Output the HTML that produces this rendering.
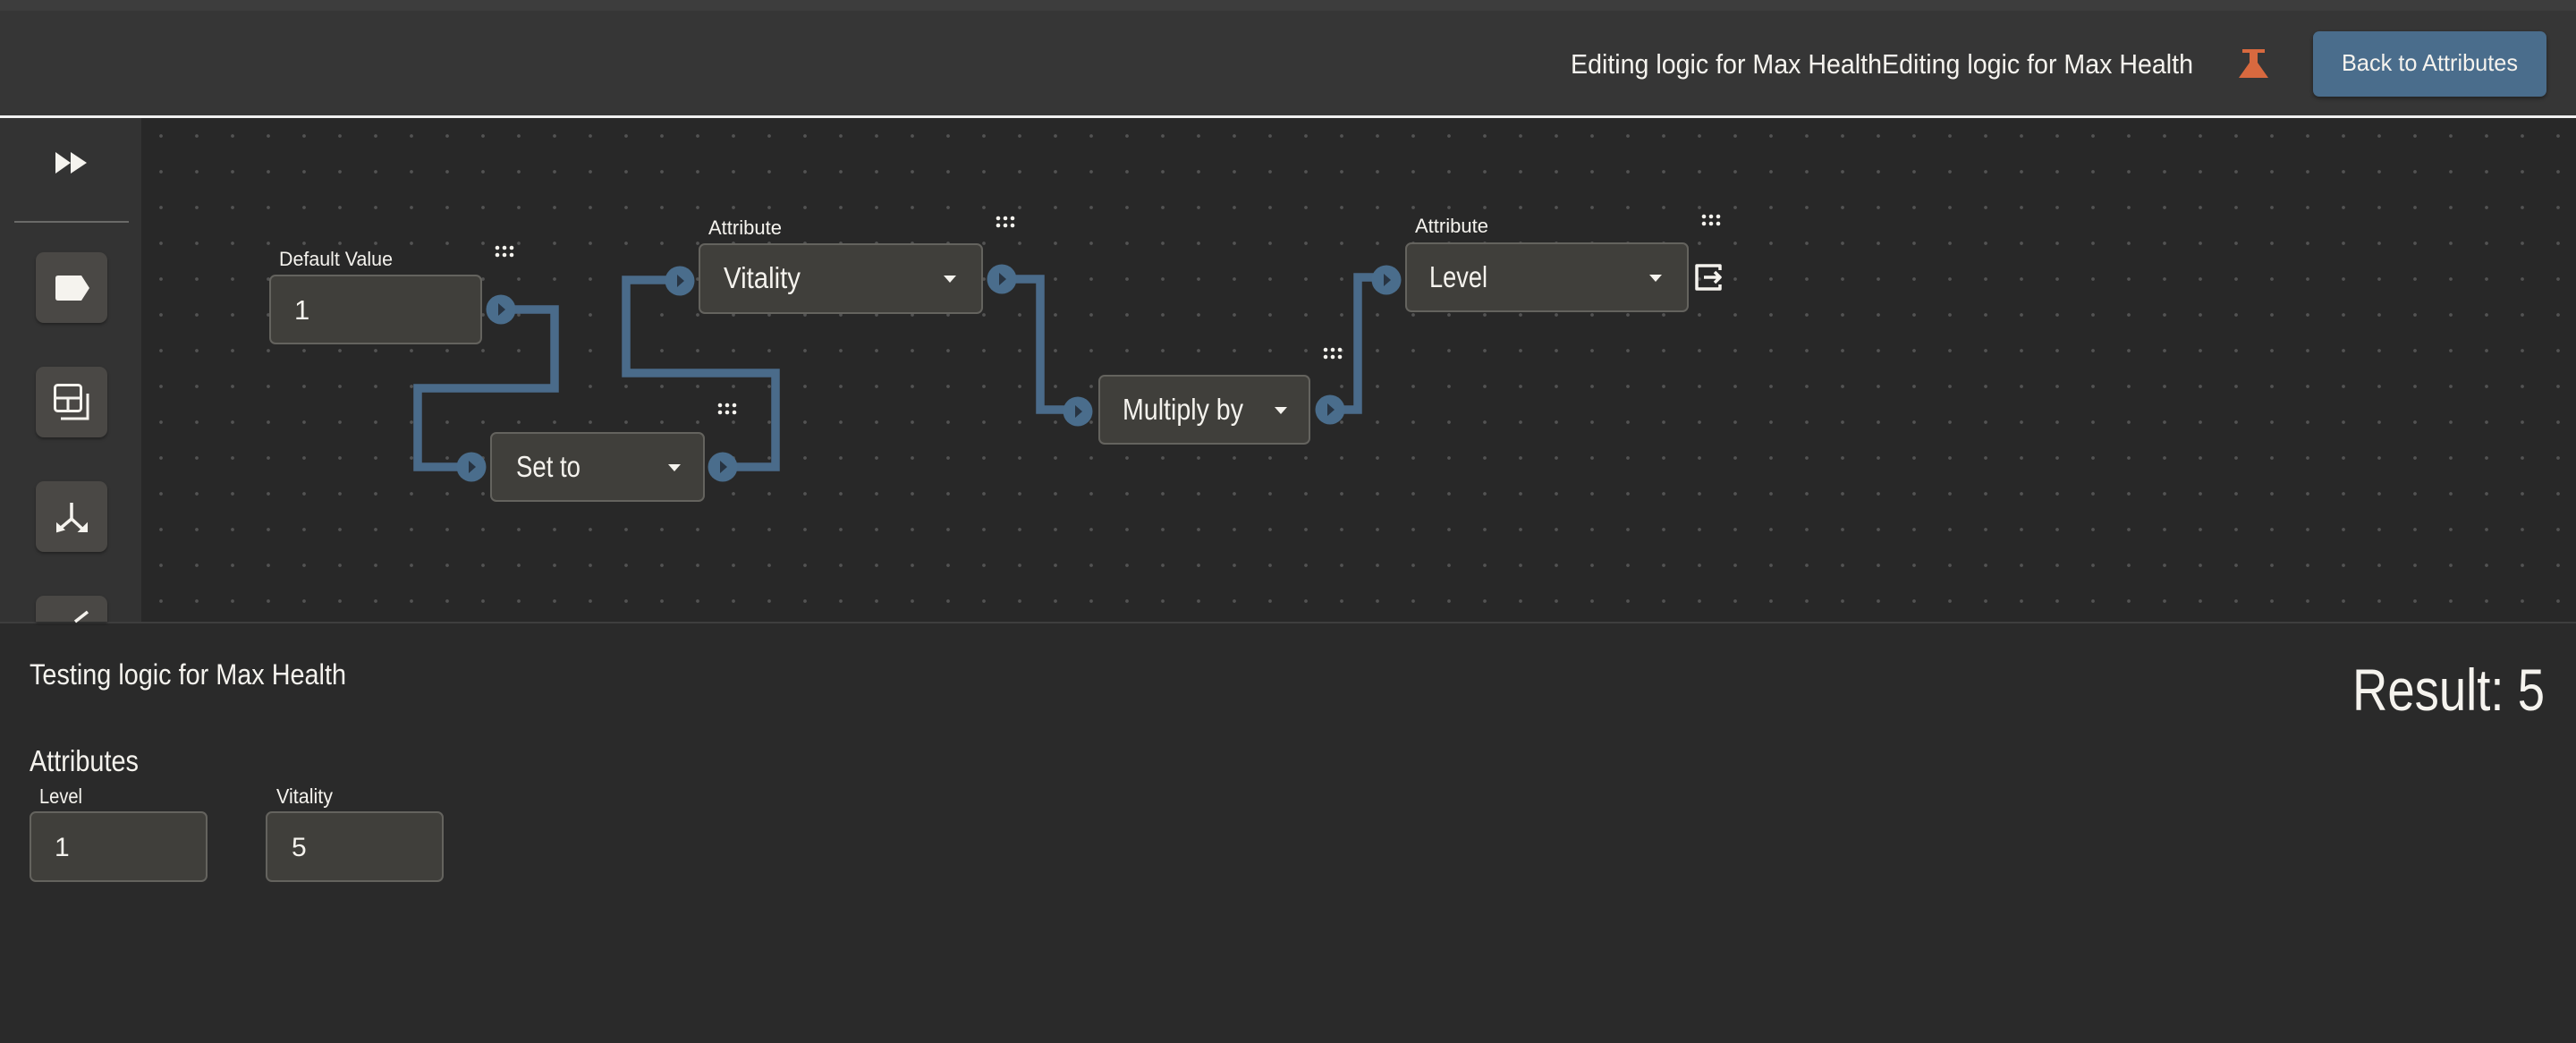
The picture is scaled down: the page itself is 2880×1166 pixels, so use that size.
<!DOCTYPE html>
<html><head><meta charset="utf-8">
<style>
*{margin:0;padding:0;box-sizing:border-box}
html,body{width:2880px;height:1166px;overflow:hidden;background:#2a2a2a;font-family:"Liberation Sans",sans-serif;color:#f5f3ee}
.abs{position:absolute}
.t{position:absolute;white-space:nowrap;transform-origin:0 0;line-height:1}
#topstrip{left:0;top:0;width:2880px;height:12px;background:#3d3d3d}
#header{left:0;top:12px;width:2880px;height:118px;background:#363636}
#hline{left:0;top:129px;width:2880px;height:3px;background:#f0f0f0}
#side{left:0;top:132px;width:158px;height:564px;background:#333333}
#canvas{left:158px;top:132px;width:2722px;height:564px;background-color:#282828;
 background-image:radial-gradient(circle at 20px 20px,#535353 0,#535353 1.6px,transparent 2.2px);
 background-size:40px 40px;background-position:2px 0}
#bline{left:0;top:695px;width:2880px;height:2px;background:#3e3e3e}
.sbtn{position:absolute;left:40px;width:80px;height:79px;background:#4a4845;border-radius:9px;box-shadow:0 2px 3px rgba(0,0,0,.35)}
.box{position:absolute;background:#403f3b;border:2px solid #64635e;border-radius:7px}
.btn{left:2586px;top:35px;width:261px;height:73px;background:#4a6d8c;border-radius:7px;box-shadow:0 2px 4px rgba(0,0,0,.4)}
</style></head><body>
<div id="topstrip" class="abs"></div>
<div id="header" class="abs"></div>
<div id="hline" class="abs"></div>
<div id="side" class="abs"></div>
<div id="canvas" class="abs"></div>
<div id="bline" class="abs"></div>

<div class="t" id="h1" style="left:1756px;top:56px;font-size:31px">Editing logic for Max HealthEditing logic for Max Health</div>
<div class="abs btn"></div>
<div class="t" id="h2" style="left:2618px;top:57px;font-size:26px">Back to Attributes</div>

<div class="abs" style="left:16px;top:247px;width:128px;height:2px;background:#6a6a68"></div>
<div class="sbtn" style="top:282px"></div>
<div class="sbtn" style="top:410px"></div>
<div class="sbtn" style="top:538px"></div>
<div class="sbtn" style="top:666px;height:29px;border-radius:9px 9px 0 0"></div>

<div class="box" style="left:301px;top:307px;width:238px;height:78px"></div>
<div class="box" style="left:548px;top:483px;width:240px;height:78px"></div>
<div class="box" style="left:781px;top:272px;width:318px;height:79px"></div>
<div class="box" style="left:1228px;top:419px;width:237px;height:78px"></div>
<div class="box" style="left:1571px;top:271px;width:317px;height:78px"></div>

<div class="t" id="l1" style="left:312px;top:279px;font-size:22px">Default Value</div>
<div class="t" id="l2" style="left:792px;top:244px;font-size:22px">Attribute</div>
<div class="t" id="l3" style="left:1582px;top:242px;font-size:22px">Attribute</div>
<div class="t" id="n1" style="left:329px;top:331px;font-size:31px">1</div>
<div class="t" id="n2" style="left:577px;top:505px;font-size:33px">Set to</div>
<div class="t" id="n3" style="left:809px;top:294px;font-size:33px">Vitality</div>
<div class="t" id="n4" style="left:1255px;top:441px;font-size:33px">Multiply by</div>
<div class="t" id="n5" style="left:1598px;top:293px;font-size:33px">Level</div>

<div class="t" id="b1" style="left:33px;top:738px;font-size:32px">Testing logic for Max Health</div>
<div class="t" id="b2" style="left:2630px;top:738px;font-size:66px">Result: 5</div>
<div class="t" id="b3" style="left:33px;top:834px;font-size:33px">Attributes</div>
<div class="t" id="b4" style="left:44px;top:879px;font-size:23px">Level</div>
<div class="t" id="b5" style="left:309px;top:879px;font-size:23px">Vitality</div>
<div class="box" style="left:33px;top:907px;width:199px;height:79px"></div>
<div class="box" style="left:297px;top:907px;width:199px;height:79px"></div>
<div class="t" id="b6" style="left:61px;top:933px;font-size:30px">1</div>
<div class="t" id="b7" style="left:326px;top:933px;font-size:30px">5</div>

<svg class="abs" style="left:0;top:0" width="2880" height="1166" viewBox="0 0 2880 1166">
 <path d="M2507 55 H2532 V59 H2524 V70 L2536 87 H2503 L2515 70 V59 H2507 Z" fill="#d8693f"/>
 <path d="M62 170 L79 182 L62 194 Z M79 170 L97 182 L79 194 Z" fill="#f5f3ee"/>
 <path d="M65 308 H91 L100 322 L91 336 H65 Q62 336 62 333 V311 Q62 308 65 308 Z" fill="#f5f3ee"/>
 <g fill="none" stroke="#f5f3ee" stroke-width="3">
  <rect x="61.5" y="430.5" width="29" height="29" rx="3"/>
  <path d="M61.5 445 H90.5 M76 445 V459.5"/>
  <path d="M68 468 H98 V440"/>
 </g>
 <g fill="none" stroke="#f5f3ee" stroke-width="3.5">
  <path d="M80 562 V580 L94 593"/>
  <path d="M80 580 L67 591"/>
 </g>
 <path d="M89 594 H97 V586 Z" fill="#f5f3ee" stroke="#f5f3ee" stroke-width="2"/>
 <path d="M64 594 V586 L71 592 Z" fill="#f5f3ee" stroke="#f5f3ee" stroke-width="2"/>
 <path d="M84 695 L98 684" stroke="#f5f3ee" stroke-width="3.5"/>

 <g fill="none" stroke="#4a6b8a" stroke-width="9.5" stroke-linejoin="miter">
  <path d="M560 346 H620 V434 H467 V522 H527"/>
  <path d="M808 522 H867 V417 H700 V313 H760"/>
  <path d="M1120 312 H1163 V458 H1205"/>
  <path d="M1487 458 H1518 V310 H1550"/>
 </g>
 <g fill="#4a6d8c">
  <circle cx="560" cy="346" r="16.5"/><circle cx="527" cy="522" r="16.5"/>
  <circle cx="808" cy="522" r="16.5"/><circle cx="760" cy="314" r="16.5"/>
  <circle cx="1120" cy="312" r="16.5"/><circle cx="1205" cy="460" r="16.5"/>
  <circle cx="1487" cy="458" r="16.5"/><circle cx="1550" cy="313" r="16.5"/>
 </g>
 <g fill="#283442">
  <path d="M557 339 L565 346 L557 353 Z"/><path d="M524 515 L532 522 L524 529 Z"/>
  <path d="M805 515 L813 522 L805 529 Z"/><path d="M757 307 L765 314 L757 321 Z"/>
  <path d="M1117 305 L1125 312 L1117 319 Z"/><path d="M1202 453 L1210 460 L1202 467 Z"/>
  <path d="M1484 451 L1492 458 L1484 465 Z"/><path d="M1547 306 L1555 313 L1547 320 Z"/>
 </g>
 <g fill="#f5f3ee">
  <path d="M747 519 H761 L754 527 Z"/><path d="M1055 308 H1069 L1062 316 Z"/>
  <path d="M1425 455 H1439 L1432 463 Z"/><path d="M1844 307 H1858 L1851 315 Z"/>
 </g>
 <g fill="#f5f3ee">
  <g transform="translate(556,277)"><circle cx="0" cy="0" r="2.3"/><circle cx="8" cy="0" r="2.3"/><circle cx="16" cy="0" r="2.3"/><circle cx="0" cy="8" r="2.3"/><circle cx="8" cy="8" r="2.3"/><circle cx="16" cy="8" r="2.3"/></g>
  <g transform="translate(805,453)"><circle cx="0" cy="0" r="2.3"/><circle cx="8" cy="0" r="2.3"/><circle cx="16" cy="0" r="2.3"/><circle cx="0" cy="8" r="2.3"/><circle cx="8" cy="8" r="2.3"/><circle cx="16" cy="8" r="2.3"/></g>
  <g transform="translate(1116,244)"><circle cx="0" cy="0" r="2.3"/><circle cx="8" cy="0" r="2.3"/><circle cx="16" cy="0" r="2.3"/><circle cx="0" cy="8" r="2.3"/><circle cx="8" cy="8" r="2.3"/><circle cx="16" cy="8" r="2.3"/></g>
  <g transform="translate(1482,391)"><circle cx="0" cy="0" r="2.3"/><circle cx="8" cy="0" r="2.3"/><circle cx="16" cy="0" r="2.3"/><circle cx="0" cy="8" r="2.3"/><circle cx="8" cy="8" r="2.3"/><circle cx="16" cy="8" r="2.3"/></g>
  <g transform="translate(1905,242)"><circle cx="0" cy="0" r="2.3"/><circle cx="8" cy="0" r="2.3"/><circle cx="16" cy="0" r="2.3"/><circle cx="0" cy="8" r="2.3"/><circle cx="8" cy="8" r="2.3"/><circle cx="16" cy="8" r="2.3"/></g>
 </g>
 <g fill="none" stroke="#f5f3ee" stroke-width="3.5" stroke-linejoin="round">
  <path d="M1923 302 V297 H1897 V323 H1923 V318"/>
  <path d="M1905 310 H1923 M1917 304 L1923 310 L1917 316"/>
 </g>
</svg>

<script>
var fits={h1:696,h2:197,l1:127,l2:82,l3:82,n2:72,n3:86,n4:135,n5:65,b1:354,b2:215,b3:122,b4:48,b5:63};
for(var k in fits){var e=document.getElementById(k);var w=e.getBoundingClientRect().width;if(w>0){e.style.transform='scaleX('+(fits[k]/w)+')';}}
</script>
</body></html>
